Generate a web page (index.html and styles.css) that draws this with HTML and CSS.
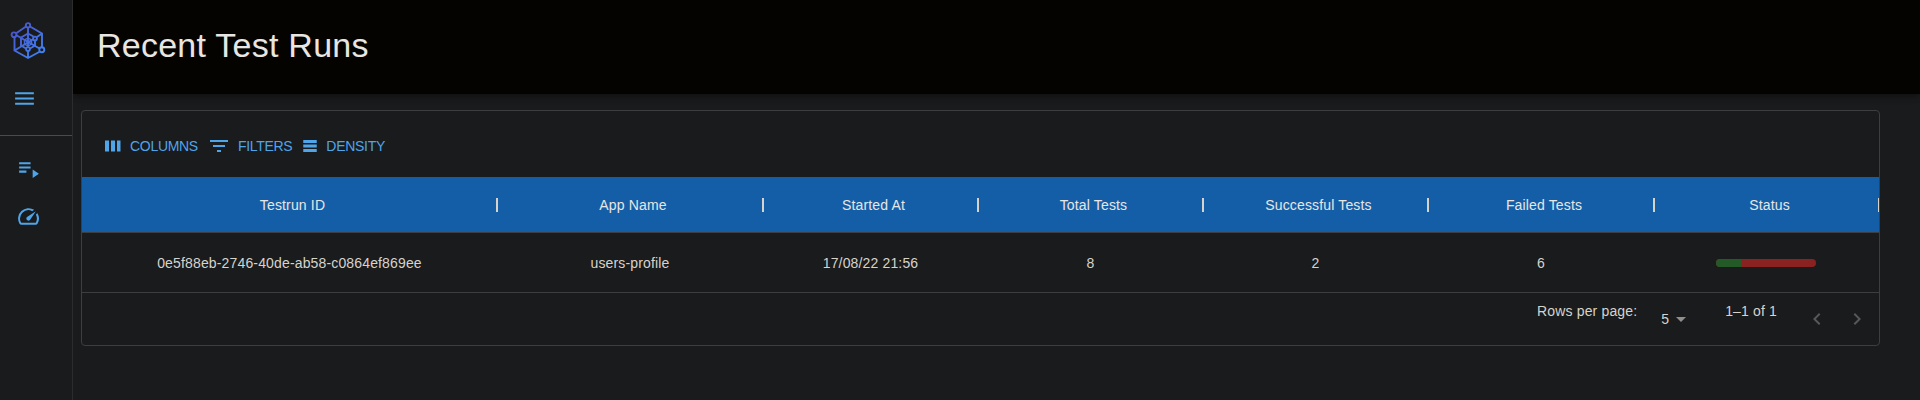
FILE: index.html
```html
<!DOCTYPE html>
<html lang="en">
<head>
<meta charset="utf-8">
<title>Recent Test Runs</title>
<link rel="stylesheet" href="styles.css">
</head>
<body>
<div class="app">
  <nav class="sidebar">
    <div class="brand">
      <svg class="logo" viewBox="0 0 36 38" fill="none" stroke="url(#lg)" stroke-width="1.9">
        <defs><linearGradient id="lg" gradientUnits="userSpaceOnUse" x1="2" y1="2" x2="34" y2="34"><stop offset="0" stop-color="#4a4fc4"/><stop offset="1" stop-color="#3f86f7"/></linearGradient></defs>
        <path d="M20 4.500L32 11.500V25.500M30 29.500L18 36L4.500 28.500V14.500M6.500 11L16 4.500M18 6V24.500M18 29V36M6 13L29.500 26.500M23.500 17L4.500 28.500M27 15L32 11.500"/>
        <path d="M18 11.500L23.500 14.500M25 18.500V23.500L20 26.500M16 26.500L11 23.500V15.500L18 11.500"/>
        <path d="M18 16L21.500 18V22L18 24L14.500 22V18Z" stroke-width="1.400"/>
        <circle cx="18" cy="3.300" r="2.200"/><circle cx="4" cy="12.800" r="2.400"/><circle cx="31.800" cy="27.800" r="2.500"/><circle cx="18" cy="27" r="1.900"/><circle cx="25" cy="16.500" r="1.900"/>
      </svg>
    </div>
    <div class="menu"><svg class="icon" viewBox="0 0 24 24"><path d="M3 18h18v-2H3v2zm0-5h18v-2H3v2zm0-7v2h18V6H3z"/></svg></div>
    <div class="links">
      <svg class="icon" viewBox="0 0 24 24"><path d="M3 10h11v2H3zM3 6h11v2H3zM3 14h7v2H3zM16 13v8l6-4z"/></svg>
      <svg class="icon" viewBox="0 0 24 24"><path d="m20.380 8.570-1.230 1.850a8 8 0 0 1-.220 7.580H5.070A8 8 0 0 1 15.580 6.850l1.850-1.230A10 10 0 0 0 3.350 19a2 2 0 0 0 1.720 1h13.850a2 2 0 0 0 1.740-1 10 10 0 0 0-.270-10.440zm-9.790 6.840a2 2 0 0 0 2.830 0l5.660-8.490-8.490 5.660a2 2 0 0 0 0 2.830z"/></svg>
    </div>
  </nav>
  <main class="main">
    <header class="header"><h1 class="title">Recent Test Runs</h1></header>
    <section class="grid">
      <div class="toolbar">
        <button class="tool"><svg class="tool-icon columns" viewBox="0 0 20 20"><path d="M2 4.500h4v11H2zM8 4.500h4v11H8zM14 4.500h3.500v11H14z"/></svg>COLUMNS</button>
        <button class="tool"><svg class="tool-icon filters" viewBox="0 0 24 24"><path d="M10 18h4v-2h-4v2zM3 6v2h18V6H3zm3 7h12v-2H6v2z"/></svg>FILTERS</button>
        <button class="tool"><svg class="tool-icon density" viewBox="0 0 24 24"><path d="M21 8H3V4h18v4zm0 2H3v4h18v-4zm0 6H3v4h18v-4z"/></svg>DENSITY</button>
      </div>
      <div class="row head">
        <div class="cell">Testrun ID</div><div class="cell">App Name</div><div class="cell">Started At</div><div class="cell">Total Tests</div><div class="cell">Successful Tests</div><div class="cell">Failed Tests</div><div class="cell">Status</div>
      </div>
      <div class="row body">
        <div class="cell">0e5f88eb-2746-40de-ab58-c0864ef869ee</div><div class="cell">users-profile</div><div class="cell">17/08/22 21:56</div><div class="cell">8</div><div class="cell">2</div><div class="cell">6</div><div class="cell"><div class="bar"><div class="passed" style="width:25%"></div></div></div>
      </div>
      <footer class="footer">
        <span class="rows-label">Rows per page:</span>
        <span class="select">5<svg class="caret" viewBox="0 0 24 24"><path d="m7 10 5 5 5-5z"/></svg></span>
        <span class="range">1–1 of 1</span>
        <span class="pager">
          <svg class="arrow" viewBox="0 0 24 24"><path d="M15.410 7.410 14 6l-6 6 6 6 1.410-1.410L10.830 12z"/></svg>
          <svg class="arrow" viewBox="0 0 24 24"><path d="M10 6 8.590 7.410 13.170 12l-4.580 4.590L10 18l6-6z"/></svg>
        </span>
      </footer>
    </section>
  </main>
</div>
</body>
</html>
```
FILE: styles.css
```css
* { box-sizing: border-box; }
body { margin: 0; background: #1a1b1c; color: #d6d3cd; font: 14px/20px "Liberation Sans", Arial, sans-serif; letter-spacing: 0.15px; }
.app { display: flex; height: 400px; overflow: hidden; }
.sidebar { position: relative; z-index: 1; width: 73px; flex: none; background: #1a1b1c; border-right: 1px solid #2b2c2e; }
.brand { padding: 22px 0 0 10px; height: 74px; }
.logo { display: block; width: 36px; height: 38px; }
.menu { height: 62px; padding: 12px; border-bottom: 1px solid #4a4b4c; }
.icon { display: block; width: 25px; height: 25px; fill: #4fa5ea; }
.links { display: flex; flex-direction: column; gap: 23px; padding: 20px 16px; }
.main { flex: 1; min-width: 0; }
.header { height: 94px; padding: 24px; background: #040300; box-shadow: 0 2px 4px -1px rgba(0,0,0,.2), 0 4px 5px rgba(0,0,0,.14), 0 1px 10px rgba(0,0,0,.12); }
.title { margin: 0; font-size: 34px; line-height: 42px; font-weight: 400; letter-spacing: 0.25px; color: #e8e6e3; }
.grid { width: 1799px; height: 236px; margin: 16px 0 0 8px; border: 1px solid #3c3e40; border-radius: 4px; overflow: hidden; }
.toolbar { display: flex; gap: 9px; height: 66px; padding: 20px 21px 0; }
.tool { display: flex; align-items: center; height: 30px; padding: 0; border: 0; background: none; color: #4fa5ea; font: 14px/20px "Liberation Sans", Arial, sans-serif; letter-spacing: -0.3px; }
.tool-icon { margin-right: 7px; fill: currentColor; }
.columns { width: 20px; height: 20px; }
.filters { width: 24px; height: 24px; }
.density { width: 18px; height: 18px; }
.row { display: grid; grid-template-columns: 415px 266px 215px 225px 225px 226px 225px; }
.cell { display: flex; align-items: center; justify-content: center; }
.head { height: 56px; background: #145ea8; border-bottom: 1px solid #3c3e40; color: #e8e6e3; }
.head .cell { position: relative; padding-left: 6px; }
.head .cell::after { content: ""; position: absolute; right: -1px; top: 21px; width: 2px; height: 14px; background: #d6d3cd; }
.body { height: 60px; border-bottom: 1px solid #3c3e40; }
.bar { width: 100px; height: 8px; margin: 1px 1px 0 0; border-radius: 4px; overflow: hidden; background: #8b2222; }
.passed { height: 100%; background: #245a27; }
.footer { display: flex; justify-content: flex-end; align-items: flex-start; height: 52px; padding-right: 10px; }
.rows-label { margin-top: 8px; }
.select { display: flex; align-items: center; margin: 14px 0 0 24px; }
.caret { width: 24px; height: 24px; fill: #918f8b; }
.range { margin: 8px 0 0 32px; }
.pager { display: flex; gap: 16px; margin: 14px 0 0 28px; }
.arrow { width: 24px; height: 24px; fill: #56575a; }
```
